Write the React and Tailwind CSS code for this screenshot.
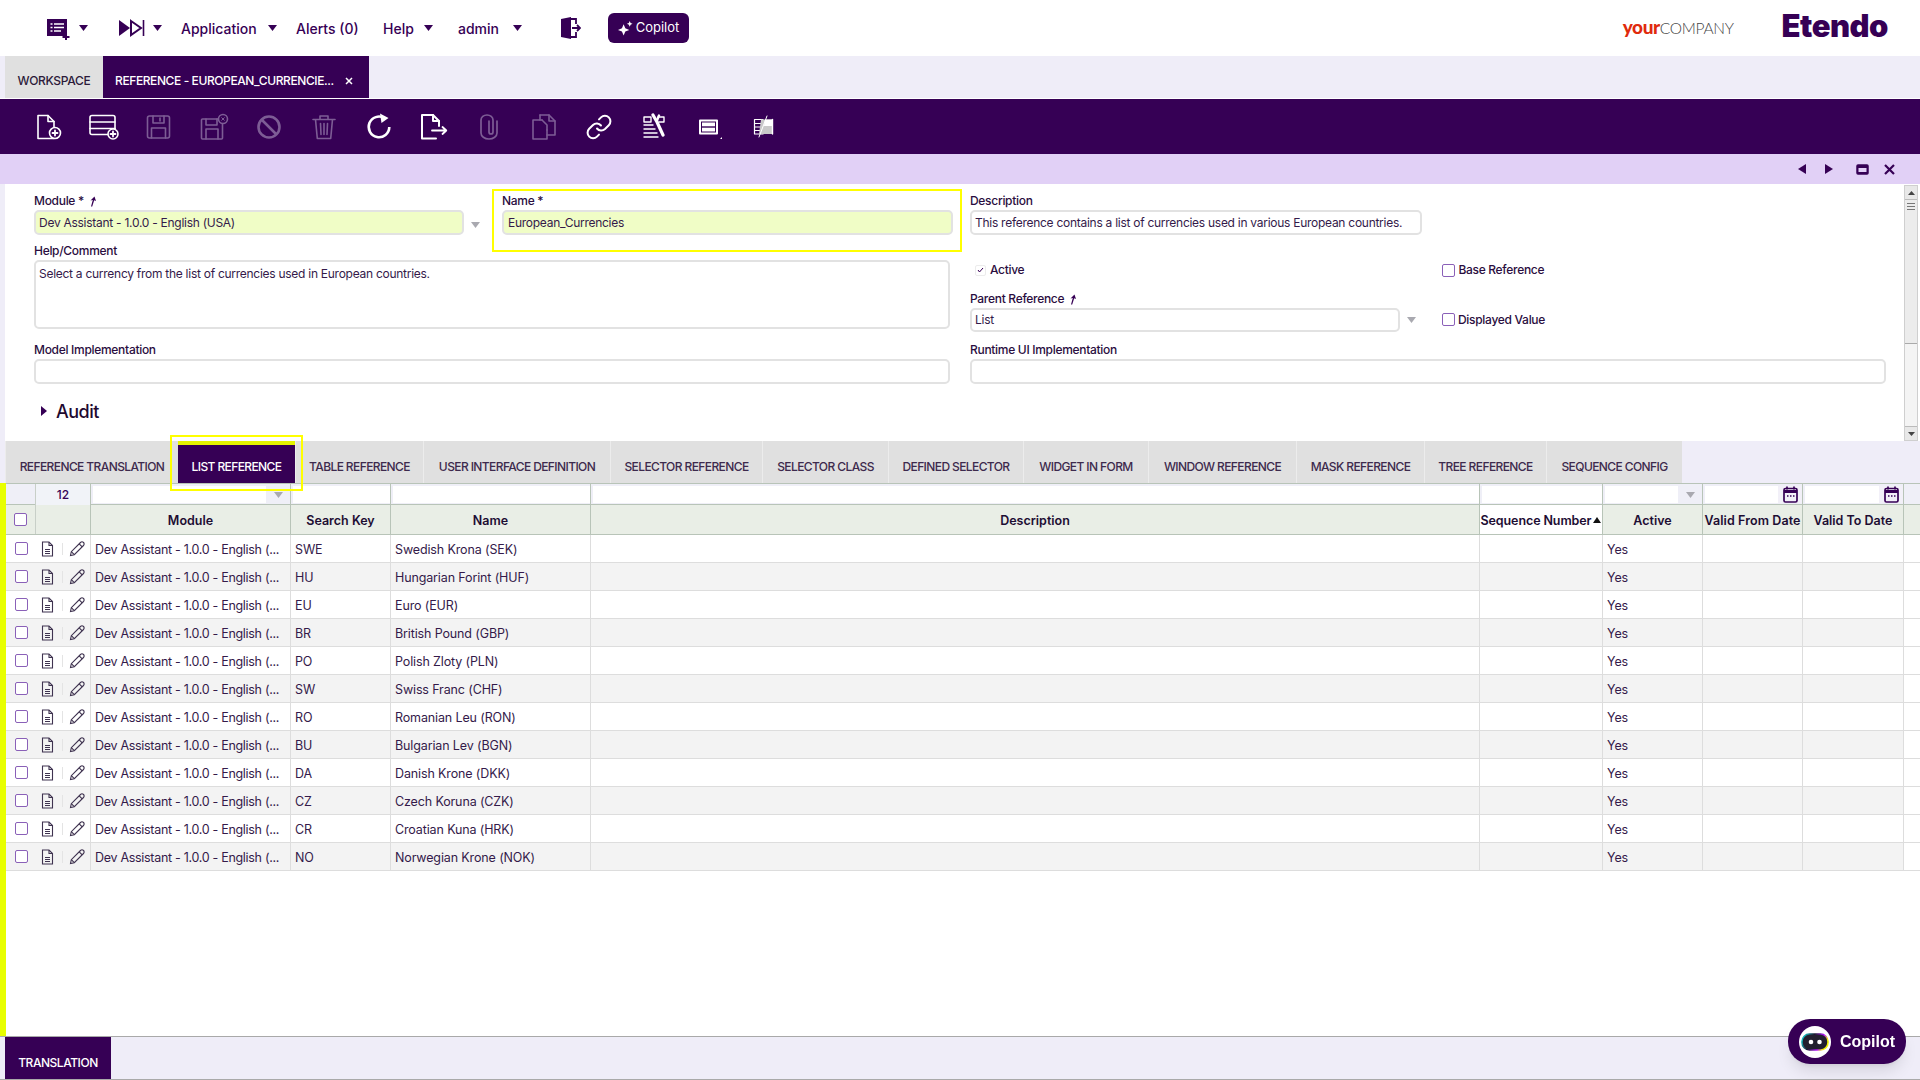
const P = "#360055";

const Caret = ({ className = "" }) => (
  <svg width="9" height="6" viewBox="0 0 9 6" className={className}><path d="M0 0h9L4.5 6z" fill="currentColor" /></svg>
);

const Ico = ({ children, off, w = 30 }) => (
  <button className={`w-[55px] h-[55px] flex items-center justify-center ${off ? "text-[#7d5c95]" : "text-white"}`}>
    <svg width={w} height="28" viewBox="0 0 30 28" fill="none" stroke="currentColor" strokeWidth="1.6" strokeLinejoin="round" strokeLinecap="round">{children}</svg>
  </button>
);

const PlusDot = ({ cx, cy, r = 5.5 }) => (
  <g>
    <circle cx={cx} cy={cy} r={r} fill={P} />
    <path d={`M${cx - 2.5} ${cy}h5M${cx} ${cy - 2.5}v5`} strokeWidth="1.8" />
  </g>
);

function Toolbar() {
  return (
    <div className="h-[55px] bg-[#360055] flex pl-[21px] mt-px">
      <Ico><path d="M4 2.500h10l6 6v17H4z" /><path d="M14 2.500v6h6" /><PlusDot cx={21} cy={20} /></Ico>
      <Ico><rect x="1" y="2.500" width="25" height="19" rx="2" /><path d="M1 9h25M1 15.500h25" /><PlusDot cx={24} cy={21} r={5} /></Ico>
      <Ico off><rect x="3.500" y="3" width="22" height="22" rx="2" /><path d="M9 3v7h11V3M16 5v3M7.500 25V15h14v10" /></Ico>
      <Ico off><rect x="2.500" y="6" width="21" height="20" rx="1" /><path d="M7 6v6h11V6M7 26V16h12v10" /><circle cx="24" cy="6" r="4.500" fill={P} /><path d="M22.700 4.700l2.600 2.600M25.300 4.700l-2.600 2.600" strokeWidth="1" /></Ico>
      <Ico off><circle cx="15" cy="14" r="10.500" strokeWidth="2.600" /><path d="M8 7l14 14" strokeWidth="2.600" /></Ico>
      <Ico off><path d="M4 6.500h22M11 6.500V3h8v3.500M6.500 6.500l1.800 19h13.400l1.800-19M11.500 10.500l.5 11M15 10.500v11M18.500 10.500l-.5 11" /></Ico>
      <Ico>
        <path d="M20.500 5.200A10.300 10.300 0 1 0 25.300 14" strokeWidth="2.600" strokeLinecap="butt" />
        <path d="M16 0.500l8.500 4.500-7 5z" fill="currentColor" stroke="none" />
      </Ico>
      <Ico><path d="M17 25.500H3V2h11l6 6v5" strokeWidth="2" /><path d="M14 2v6h6" strokeWidth="2" /><path d="M13 17.500h14M23.500 14l3.800 3.500-3.800 3.500" strokeWidth="1.800" /></Ico>
      <Ico off><path d="M23 8V20a8 6 0 0 1-16 0V7a6 5 0 0 1 12 0V19a2 2 0 0 1-4 0V8" strokeWidth="1.700" /></Ico>
      <Ico off><path d="M13 7H4v19h14v-9" /><path d="M11 2h9l6 6v14h-8" /><path d="M20 2v6h6M11 2v5M13 7l5 5v5" /></Ico>
      <Ico>
        <path d="M13 15.500a5.500 5.500 0 0 0 8 .5l3.800-3.800a5.500 5.500 0 0 0-7.800-7.800l-2 2" strokeWidth="2" />
        <path d="M17 12.500a5.500 5.500 0 0 0-8-.5l-3.800 3.800a5.500 5.500 0 0 0 7.800 7.800l2-2" strokeWidth="2" />
      </Ico>
      <Ico>
        <path d="M5 4h7v5H5zM19 4h6v5h-5M5 12h9M5 16h11M5 20h13M5 24h14" strokeWidth="1.400" />
        <path d="M14 2l4 7 6 13" strokeWidth="3.200" /><path d="M20 2.500l-2 5" strokeWidth="2.400" />
      </Ico>
      <Ico>
        <rect x="6" y="7.500" width="17" height="13" strokeWidth="2" />
        <rect x="8" y="9.500" width="13" height="3.800" fill="currentColor" stroke="none" />
        <rect x="8" y="14.700" width="13" height="3.800" fill="currentColor" stroke="none" />
        <path d="M28 24v2h-2z" fill="currentColor" stroke="none" />
      </Ico>
      <Ico>
        <path d="M14 6.500H5.500v14.500H14M5.500 10.500H14M5.500 14H14M5.500 17.500H14" strokeWidth="1.200" />
        <path d="M12 6.500h11.500V21H10z" fill="#c9c9c9" stroke="none" />
        <path d="M16 6.500h7.500v6.500H15z" fill="#fff" stroke="none" />
        <path d="M18 3L10 24" strokeWidth="1" />
        <path d="M23.500 6.500V21" strokeWidth="1.400" />
      </Ico>
    </div>
  );
}

function Header() {
  return (
    <div className="h-14 bg-white flex items-center text-[#360055] font-['Inter',sans-serif] text-[14px] font-medium">
      <svg width="24" height="24" viewBox="0 0 24 24" className="ml-[46px]">
        <path d="M1 3h20v17H1z" fill={P} />
        <path d="M4.500 8h2M8 8h10M4.500 11.500h2M8 11.500h10M4.500 15h2M8 15h7" stroke="#fff" strokeWidth="1.600" />
        <path d="M19 17.500h2v2.500h2.500v2H21v2h-2v-2h-2.500v-2H19z" fill={P} />
      </svg>
      <Caret className="ml-[9px]" />
      <svg width="27" height="18" viewBox="0 0 27 18" className="ml-[30px]">
        <path d="M1 1l11 8-11 8z" fill={P} />
        <path d="M13 2l10 7-10 7z" fill="none" stroke={P} strokeWidth="2" />
        <path d="M25.500 1v16" stroke={P} strokeWidth="1.600" />
      </svg>
      <Caret className="ml-[8px]" />
      <span className="ml-[19px] w-[73px] whitespace-nowrap">Application</span>
      <Caret className="ml-[14px]" />
      <span className="ml-[19px] w-[63px] whitespace-nowrap">Alerts (0)</span>
      <span className="ml-[24px] w-[30px]">Help</span>
      <Caret className="ml-[11px]" />
      <span className="ml-[25px] w-[44px]">admin</span>
      <Caret className="ml-[11px]" />
      <svg width="21" height="22" viewBox="0 0 21 22" className="ml-[38px]">
        <path d="M1 2l10-2v22L1 20z" fill={P} />
        <path d="M11 2h5v5M16 15v5h-5" fill="none" stroke={P} strokeWidth="1.800" />
        <path d="M12 11h8M17 8l3 3-3 3" fill="none" stroke={P} strokeWidth="1.800" />
      </svg>
      <button className="ml-[27px] w-[81px] h-[30px] rounded-md bg-[#360055] text-white text-[13px] font-normal flex items-center justify-center gap-[3px]">
        <svg width="15" height="15" viewBox="0 0 16 16" fill="#fff">
          <path d="M6 3.500l1.800 4.200L12 9.500l-4.200 1.800L6 15.500l-1.800-4.200L0 9.500l4.200-1.800z" />
          <path d="M12.500 0l.9 2.100L15.500 3l-2.100.9-.9 2.100-.9-2.100L9.500 3l2.100-.9z" />
        </svg>
        Copilot
      </button>
      <div className="flex-1" />
      <div className="flex items-baseline justify-end font-['Lato',sans-serif] leading-none mr-[48px] w-[111px] -mt-[3px]">
        <span className="text-[19px] font-black text-[#e02a0c] tracking-[-0.4px]">your</span>
        <span className="text-[15.500px] font-light text-[#444] tracking-[-0.3px]">COMPANY</span>
      </div>
      <span className="font-['Inter',sans-serif] font-black text-[31px] leading-none text-[#360055] tracking-[-0.5px] mr-[32px] -mt-[5px]">Etendo</span>
    </div>
  );
}

function WindowTabs() {
  return (
    <div className="h-[42px] bg-[#efedf8] flex pl-[5px] font-['Inter',sans-serif] text-[12px] font-medium">
      <div className="w-[98px] bg-[#e0e0e0] text-[#2c1a3a] flex items-center justify-center tracking-[-0.3px] pt-[8px]">WORKSPACE</div>
      <div className="w-[266px] bg-[#360055] text-white flex items-center pl-[12px] pt-[8px] tracking-[-0.4px] whitespace-nowrap">
        REFERENCE - EUROPEAN_CURRENCIE...
        <svg width="8" height="8" viewBox="0 0 8 8" className="ml-[11px]"><path d="M1 1l6 6M7 1L1 7" stroke="#fff" strokeWidth="1.500" /></svg>
      </div>
    </div>
  );
}

const Tri = ({ d }) => <svg width="10" height="12" viewBox="0 0 10 12"><path d={d} fill={P} /></svg>;

function DetailBar() {
  return (
    <div className="h-[30px] bg-[#e1d0f6] flex items-center justify-end pr-[25px]">
      <Tri d="M9 1v10L1 6z" />
      <span className="ml-[17px]"><Tri d="M1 1v10l8-5z" /></span>
      <svg width="13" height="11" viewBox="0 0 13 11" className="ml-[22px]"><rect x="1" y="1" width="11" height="9" rx="1" fill={P} stroke={P} strokeWidth="1.500" /><rect x="2.500" y="4" width="8" height="4" fill="#e1d0f6" /></svg>
      <svg width="11" height="11" viewBox="0 0 11 11" className="ml-[15px]"><path d="M1 1l9 9M10 1l-9 9" stroke={P} strokeWidth="2.200" /></svg>
    </div>
  );
}

const Label = ({ children, link }) => (
  <div className="h-[14px] leading-[14px] text-[12px] font-medium text-[#2a0d40] flex items-center gap-[5px] tracking-[-0.3px] whitespace-nowrap">
    {children}
    {link && <svg width="8" height="11" viewBox="0 0 8 11"><path d="M2 10.500l1.800-6.500L1.500 4.500 5.500 0.500 7 5 5.200 4.200 3.200 10.500z" fill={P} /></svg>}
  </div>
);

const Box = ({ children, yellow, className = "" }) => (
  <div className={`mt-[2px] border-2 border-[#e2e2e2] rounded-[5px] text-[12px] text-[#341a4a] px-[3px] tracking-[-0.27px] whitespace-nowrap ${yellow ? "bg-[#f0fdc6]" : "bg-white"} ${className}`}>{children}</div>
);

const Arrow = ({ className = "" }) => (
  <svg width="9" height="6" viewBox="0 0 9 6" className={className}><path d="M0 0h9L4.500 6z" fill="#a9a9b0" /></svg>
);

const Check = () => <span className="w-[13px] h-[13px] rounded-[2px] border border-[#8a60b8] bg-white block shrink-0" />;

function FormScroll() {
  return (
    <div className="w-[14px] mt-px ml-[2px] mr-[2px] flex flex-col border border-[#cfcfcf] bg-[#f4f4f4]">
      <div className="h-[14px] bg-[#e8e8e8] flex items-center justify-center border-b border-[#bbb]">
        <svg width="7" height="4" viewBox="0 0 7 4"><path d="M0 4l3.500-4L7 4z" fill="#444" /></svg>
      </div>
      <div className="h-[144px] bg-[#ececec] border-b border-[#aaa] pt-[3px] flex flex-col gap-[2px] items-center">
        <span className="w-[8px] h-px bg-[#777]" /><span className="w-[8px] h-px bg-[#777]" /><span className="w-[8px] h-px bg-[#777]" />
      </div>
      <div className="flex-1" />
      <div className="h-[14px] bg-[#e8e8e8] flex items-center justify-center border-t border-[#bbb]">
        <svg width="7" height="4" viewBox="0 0 7 4"><path d="M0 0l3.500 4L7 0z" fill="#444" /></svg>
      </div>
    </div>
  );
}

function Form() {
  return (
    <div className="h-[257px] flex bg-[#efedf8] pl-[5px] font-['Inter',sans-serif]">
      <div className="flex-1 bg-white flex">
        <div className="flex-1 pl-[29px] pt-[10px]">
          <div className="flex">
            <div className="w-[430px]">
              <Label link>Module *</Label>
              <Box yellow className="h-[25px] leading-[21px]">Dev Assistant - 1.0.0 - English (USA)</Box>
            </div>
            <Arrow className="ml-[7px] mt-[28px]" />
            <div className="relative ml-[22px] w-[451px]">
              <div className="absolute -left-[10px] -top-[5px] w-[470px] h-[63px] border-[2px] border-[#ffff00]" />
              <Label>Name *</Label>
              <Box yellow className="h-[25px] leading-[21px] pl-[4px]">European_Currencies</Box>
            </div>
            <div className="ml-[17px] w-[452px]">
              <Label>Description</Label>
              <Box className="h-[25px] leading-[21px]">This reference contains a list of currencies used in various European countries.</Box>
            </div>
          </div>
          <div className="flex mt-[9px]">
            <div className="w-[916px]">
              <Label>Help/Comment</Label>
              <Box className="h-[69px] leading-[18px] pt-[3px]">Select a currency from the list of currencies used in European countries.</Box>
              <div className="mt-[14px]"><Label>Model Implementation</Label></div>
              <Box className="h-[25px]" />
            </div>
            <div className="ml-[20px] w-[916px]">
              <div className="h-[48px] flex flex-col">
                <div className="flex items-center h-[36px] pt-[16px]">
                  <span className="ml-[5px] w-[11px] h-[11px] border border-[#ececec] rounded-[2px] flex items-center justify-center">
                    <svg width="7" height="6" viewBox="0 0 7 6"><path d="M1 3l1.500 2L6 1" stroke={P} fill="none" strokeWidth="1" /></svg>
                  </span>
                  <span className="ml-[4px] text-[12px] font-medium text-[#2a0d40] tracking-[-0.3px]">Active</span>
                  <span className="ml-[418px]"><Check /></span>
                  <span className="ml-[3px] text-[12px] font-medium text-[#2a0d40] tracking-[-0.3px]">Base Reference</span>
                </div>
              </div>
              <Label link>Parent Reference</Label>
              <div className="flex items-center">
                <Box className="w-[430px] h-[24px] leading-[20px] text-[#5a4a68]">List</Box>
                <Arrow className="ml-[7px] mt-[2px]" />
                <span className="ml-[26px]"><Check /></span>
                <span className="ml-[3px] pt-[1px] text-[12px] font-medium text-[#2a0d40] tracking-[-0.3px]">Displayed Value</span>
              </div>
              <div className="mt-[11px]"><Label>Runtime UI Implementation</Label></div>
              <Box className="h-[25px]" />
            </div>
          </div>
          <div className="flex items-center h-[24px] mt-[15px] ml-[7px]">
            <svg width="6" height="10" viewBox="0 0 6 10"><path d="M0 0l6 5-6 5z" fill={P} /></svg>
            <span className="ml-[9px] text-[18px] font-medium text-[#1f0a30] tracking-[-0.5px]">Audit</span>
          </div>
        </div>
        <FormScroll />
      </div>
    </div>
  );
}

const tabs = [
  ["REFERENCE TRANSLATION", "w-[173px]"],
  ["LIST REFERENCE", "w-[117px]", true],
  ["TABLE REFERENCE", "w-[128px]"],
  ["USER INTERFACE DEFINITION", "w-[187px]"],
  ["SELECTOR REFERENCE", "w-[152px]"],
  ["SELECTOR CLASS", "w-[126px]"],
  ["DEFINED SELECTOR", "w-[135px]"],
  ["WIDGET IN FORM", "w-[125px]"],
  ["WINDOW REFERENCE", "w-[148px]"],
  ["MASK REFERENCE", "w-[128px]"],
  ["TREE REFERENCE", "w-[122px]"],
  ["SEQUENCE CONFIG", "w-[136px]"],
];

function SubTabs() {
  return (
    <div className="h-[42px] bg-[#efedf8] flex pl-[5px] font-['Inter',sans-serif] text-[12px] font-medium tracking-[-0.6px] whitespace-nowrap">
      {tabs.map(([t, w, active]) => active ? (
        <div key={t} className={`${w} relative`}>
          <div className="absolute -left-[8px] -right-[8px] -top-[6px] -bottom-[8px] border-[2px] border-[#ffff00]" />
          <div className="h-full bg-[#360055] border-t-[4px] border-[#e5f500] text-white flex items-center justify-center pt-[5px]">{t}</div>
        </div>
      ) : (
        <div key={t} className={`${w} bg-[#e0e0e0] border-l border-[#ececec] text-[#3d2a4d] flex items-center justify-center pt-[9px]`}>{t}</div>
      ))}
    </div>
  );
}

const cols = "grid grid-cols-[30px_55px_200px_100px_200px_889px_123px_100px_100px_101px_16px]";
const hcell = "flex items-center justify-center border-r border-[#b8c4b8] pt-[4px] text-[12.500px] font-semibold text-[#1d0d33] whitespace-nowrap";

const Calendar = () => (
  <svg width="15" height="17" viewBox="0 0 15 17" fill="none" stroke={P} className="ml-[1px]">
    <rect x="1" y="2.500" width="13" height="13.500" rx="1.500" strokeWidth="1.700" />
    <path d="M1 5.500h13" strokeWidth="3" /><path d="M4 0.500v3M11 0.500v3" strokeWidth="1.700" />
    <path d="M4 10h1.500M7 10h1.500M10 10h1.500" strokeWidth="1.500" />
  </svg>
);

const FCell = ({ right, rightBg = "bg-[#efeff7]" }) => (
  <div className="flex border-r border-[#b8c4b8] p-[2px] pr-0 pb-[3px]">
    <div className="flex-1 bg-white" />
    {right && <div className={`w-[24px] flex items-center justify-center ${rightBg}`}>{right}</div>}
  </div>
);

const rows = [
  ["SWE", "Swedish Krona (SEK)"],
  ["HU", "Hungarian Forint (HUF)"],
  ["EU", "Euro (EUR)"],
  ["BR", "British Pound (GBP)"],
  ["PO", "Polish Zloty (PLN)"],
  ["SW", "Swiss Franc (CHF)"],
  ["RO", "Romanian Leu (RON)"],
  ["BU", "Bulgarian Lev (BGN)"],
  ["DA", "Danish Krone (DKK)"],
  ["CZ", "Czech Koruna (CZK)"],
  ["CR", "Croatian Kuna (HRK)"],
  ["NO", "Norwegian Krone (NOK)"],
];

const Doc = () => (
  <svg width="13" height="16" viewBox="0 0 13 16" fill="none" stroke="#3f3350" strokeWidth="1.100">
    <path d="M1.500 1h6.500l3.500 3.500V15h-10z" /><path d="M8 1v3.500h3.500" /><path d="M4 8.500h5M4 10.500h5M4 12.500h5" />
  </svg>
);
const Pencil = () => (
  <svg width="16" height="16" viewBox="0 0 16 16" fill="none" stroke="#3f3350" strokeWidth="1.100">
    <path d="M1.500 14.500l.8-3.800L11.500 1.500a1.800 1.800 0 0 1 3 3L5.300 13.700z" /><path d="M2.300 10.700l3 3M10.200 2.800l3 3" />
  </svg>
);

function Grid() {
  return (
    <div className="flex-1 flex flex-col border-l-[6px] border-[#e8ff00] font-['Inter',sans-serif] bg-white">
      <div className={`${cols} h-[22px] bg-[#efeff7] border-t border-b border-[#b8c4b8]`}>
        <div className="border-r border-[#c8cfc8]" />
        <div className="flex items-center justify-center border-r border-[#b8c4b8] text-[12px] font-medium text-[#360055] bg-[#f1f3f8]">12</div>
        <FCell right={<Arrow />} />
        <FCell />
        <FCell />
        <FCell />
        <FCell />
        <FCell right={<Arrow />} />
        <FCell right={<Calendar />} rightBg="bg-[#f2f0f8]" />
        <FCell right={<Calendar />} rightBg="bg-[#f2f0f8]" />
        <div />
      </div>
      <div className={`${cols} h-[30px] bg-[#e9eee6] border-b border-[#b8c4b8]`}>
        <div className="flex items-center justify-center border-r border-[#c8cfc8]"><Check /></div>
        <div className="border-r border-[#b8c4b8]" />
        <div className={hcell}>Module</div>
        <div className={hcell}>Search Key</div>
        <div className={hcell}>Name</div>
        <div className={hcell}>Description</div>
        <div className={`${hcell} bg-white gap-[2px] tracking-[-0.1px]`}>Sequence Number
          <svg width="8" height="6" viewBox="0 0 8 6" className="shrink-0 -mt-[3px]"><path d="M0 6l4-6 4 6z" fill="#111" /></svg>
        </div>
        <div className={hcell}>Active</div>
        <div className={`${hcell} tracking-[0.1px]`}>Valid From Date</div>
        <div className={hcell}>Valid To Date</div>
        <div />
      </div>
      {rows.map(([k, n], i) => (
        <div key={k} className={`${cols} h-[28px] border-b border-[#dddddd] text-[12.500px] text-[#341a4a] tracking-[-0.13px] whitespace-nowrap ${i % 2 ? "bg-[#f3f3f3]" : "bg-white"}`}>
          <div className="flex items-center justify-center"><Check /></div>
          <div className="flex items-center border-r border-[#dddddd]">
            <span className="ml-[5px]"><Doc /></span>
            <span className="ml-[8px] w-px h-[12px] bg-[#e4e4e4]" />
            <span className="ml-[6px]"><Pencil /></span>
          </div>
          <div className="flex items-center border-r border-[#dddddd] pl-[4px] pt-[4px] tracking-[-0.3px]">Dev Assistant - 1.0.0 - English (...</div>
          <div className="flex items-center border-r border-[#dddddd] pl-[4px] pt-[4px]">{k}</div>
          <div className="flex items-center border-r border-[#dddddd] pl-[4px] pt-[4px]">{n}</div>
          <div className="border-r border-[#dddddd]" />
          <div className="border-r border-[#dddddd]" />
          <div className="flex items-center border-r border-[#dddddd] pl-[4px] pt-[4px]">Yes</div>
          <div className="border-r border-[#dddddd]" />
          <div className="border-r border-[#dddddd]" />
          <div className="bg-white" />
        </div>
      ))}
    </div>
  );
}

function BottomBar() {
  return (
    <div className="h-[44px] bg-[#efedf8] border-t border-b border-[#a9a9a9] pl-[5px] flex font-['Inter',sans-serif]">
      <div className="w-[106px] bg-[#360055] text-white text-[12px] font-medium flex items-center justify-center tracking-[-0.45px] pt-[9px]">TRANSLATION</div>
    </div>
  );
}

function CopilotFab() {
  return (
    <div className="fixed left-[1788px] top-[1019px] w-[118px] h-[45px] rounded-[22px] bg-[#360055] shadow-lg flex items-center pl-[11px] font-['Liberation_Sans',sans-serif] font-bold text-[16px] text-white">
      <span className="w-[32px] h-[32px] rounded-full bg-white flex items-center justify-center">
        <svg width="28" height="18" viewBox="0 0 28 18">
          <defs>
            <linearGradient id="g" x1="0" y1="0" x2="1" y2="0.300">
              <stop offset="0" stopColor="#12e6e6" /><stop offset="0.450" stopColor="#1a1a2e" /><stop offset="0.800" stopColor="#b414ff" /><stop offset="1" stopColor="#f0f000" />
            </linearGradient>
          </defs>
          <rect x="1" y="1" width="26" height="16" rx="7.500" fill="#22202e" stroke="url(#g)" strokeWidth="1.600" />
          <circle cx="10" cy="9" r="2.300" fill="#fff" /><circle cx="18.500" cy="9" r="2.300" fill="#fff" />
        </svg>
      </span>
      <span className="ml-[9px]">Copilot</span>
    </div>
  );
}

export default function App() {
  return (
    <div className="w-[1920px] h-[1080px] overflow-hidden flex flex-col bg-white">
      <Header />
      <WindowTabs />
      <Toolbar />
      <DetailBar />
      <Form />
      <SubTabs />
      <Grid />
      <BottomBar />
      <CopilotFab />
    </div>
  );
}
